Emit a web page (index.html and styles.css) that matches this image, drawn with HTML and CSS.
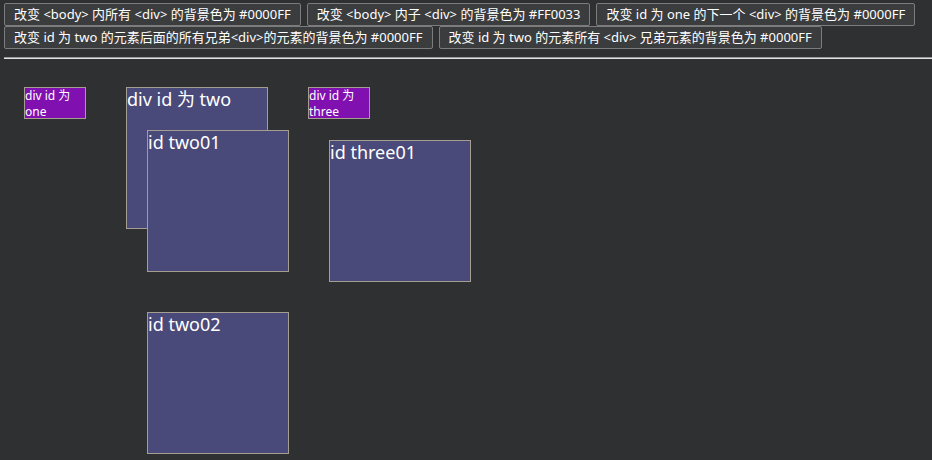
FILE: index.html
```html
<!DOCTYPE html>
<html lang="zh-CN">
<head>
<meta charset="utf-8">
<title>jQuery 选择器</title>
<link rel="stylesheet" href="styles.css">
</head>
<body>
<div class="toolbar">
  <button class="btn">改变 &lt;body&gt; 内所有 &lt;div&gt; 的背景色为 #0000FF</button>
  <button class="btn">改变 &lt;body&gt; 内子 &lt;div&gt; 的背景色为 #FF0033</button>
  <button class="btn">改变 id 为 one 的下一个 &lt;div&gt; 的背景色为 #0000FF</button>
  <button class="btn">改变 id 为 two 的元素后面的所有兄弟&lt;div&gt;的元素的背景色为 #0000FF</button>
  <button class="btn">改变 id 为 two 的元素所有 &lt;div&gt; 兄弟元素的背景色为 #0000FF</button>
</div>
<hr class="rule">
<div class="stage">
  <div class="box mini">div id 为 one</div>
  <div class="box big">div id 为 two
    <div class="box big">id two01</div>
    <div class="box big">id two02</div>
  </div>
  <div class="box mini">div id 为 three
    <div class="box big">id three01</div>
  </div>
</div>
</body>
</html>
```
FILE: styles.css
```css
html {
  background: #2f3032;
  min-height: 100%;
}
body {
  margin: 3px 0 0 4px;
  min-height: 460px;
  color: #ffffff;
  font-family: "Noto Sans", "Noto Sans CJK SC", sans-serif;
}
.toolbar {
  display: flex;
  flex-wrap: wrap;
  column-gap: 6px;
  row-gap: 0;
}
.btn {
  margin: 0;
  height: 23px;
  padding: 0 9px;
  border: 1px solid #7c7c7c;
  border-radius: 2px;
  background: #3b3c3e;
  color: #ffffff;
  font-family: "Noto Sans", "Noto Sans CJK SC", sans-serif;
  font-size: 13px;
  line-height: 21px;
  white-space: nowrap;
}
.rule {
  margin: 8px 0;
  height: 0;
  border: 0;
  border-top: 1px solid #9a9a9a;
  border-bottom: 1px solid #e2e2e2;
}
.box {
  float: left;
  margin: 20px;
  border: 1px solid #a59d8f;
}
.mini {
  width: 60px;
  height: 30px;
  background: #8010b0;
  font-size: 12px;
  line-height: 16px;
}
.big {
  width: 140px;
  height: 140px;
  background: #4a4a7a;
  font-size: 18px;
  line-height: 22px;
}
```
